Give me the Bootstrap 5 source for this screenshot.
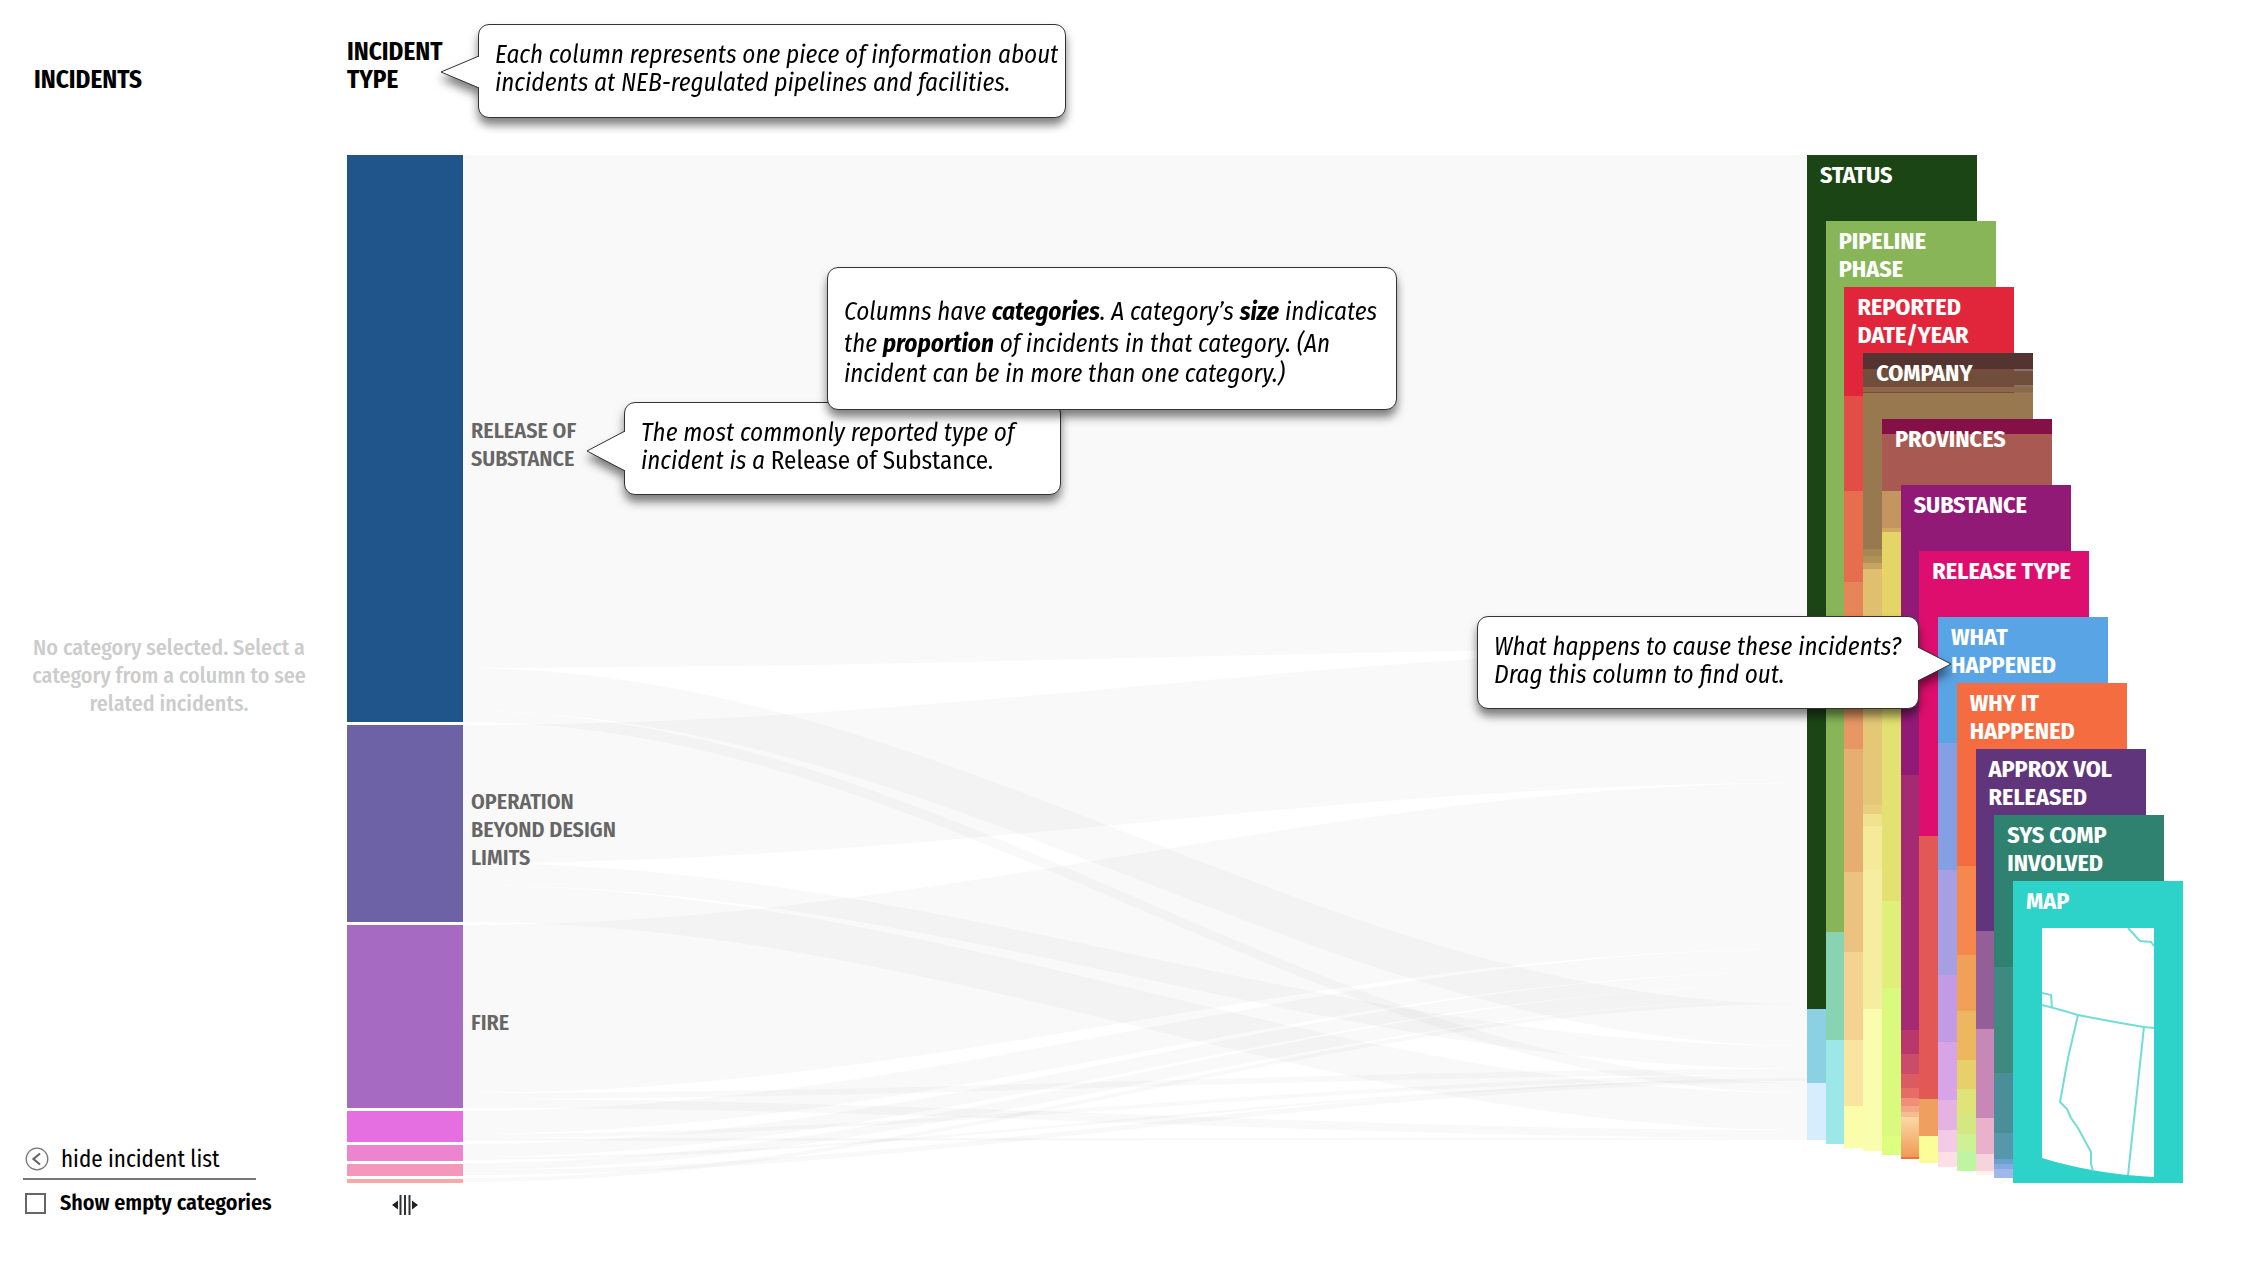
<!DOCTYPE html>
<html lang="en">
<head>
<meta charset="utf-8">
<meta name="viewport" content="width=device-width, initial-scale=1">
<title>Incidents</title>
<link href="https://cdn.jsdelivr.net/npm/bootstrap@5.3.0/dist/css/bootstrap.min.css" rel="stylesheet">
<style>
body { font-family: "Fira Sans Condensed", "Roboto Condensed", Roboto, sans-serif; font-size: 24px; line-height: 28px; color: #000; background: #fff; }
.side-panel { width: 347px; padding: 0 0 46px 23px; }
.top-row { height: 155px; padding-bottom: 61px; }
.col-title { font-size: 25px; line-height: 28px; font-weight: 700; margin: 0; }
.side-panel .col-title { padding-left: 11px; }
.empty-note { color: #ccc; font-size: 22px; font-weight: 500; width: 292px; padding-top: 52px; white-space: nowrap; }
.side-btn { color: #000; font-size: 23px; line-height: 28px; padding: 0 0 5px 2px; width: 233px; gap: 12px; border: 0; border-bottom: 2px solid #777; border-radius: 0; text-align: left; }
.empty-check { padding: 9px 0 0 2px; gap: 14px; font-size: 22px; font-weight: 600; }
.empty-check input { appearance: none; width: 21px; height: 21px; border: 2px solid #666; background: #fff; margin: 0; }
.board { padding-right: 81px; min-width: 0; }
.seg-col { width: 116px; gap: 3px; z-index: 1; }
.seg { flex-basis: 0; min-height: 0; }
.seg-block { width: 116px; flex: none; }
.seg-name { flex: none; width: 170px; padding: 14px 0 0 8px; color: #666; font-size: 22px; font-weight: 600; text-transform: uppercase; }
.flow-area { min-width: 0; }
.flow-area svg { width: 100%; height: 100%; display: block; }
.stack { display: grid; width: 376px; grid-template-columns: repeat(11, minmax(0, 1fr)) 170px; grid-template-rows: repeat(11, 66px) 1fr; }
.stack-col { width: 170px; position: relative; cursor: grab; }
.band { flex-basis: 0; min-height: 0; }
.stack-name { position: absolute; left: 13px; top: 6px; width: 150px; color: #fff; font-size: 24px; font-weight: 700; text-transform: uppercase; }
.map-view { padding: 47px 29px 6px; }
.bottom-row { height: 80px; width: 116px; padding-top: 12px; }
.tip { position: absolute; z-index: 5; background: #fff; border: 1px solid #333; border-radius: 11px; font-size: 25px; line-height: 28px; font-style: italic; padding: 16px; white-space: nowrap; filter: drop-shadow(0 7px 5px rgba(0,0,0,.5)); }
.tip strong { line-height: 32px; font-weight: 700; }
.tip svg { position: absolute; }
.tip-column { left: 478px; top: 24px; width: 588px; height: 94px; }
.tip-column svg { left: -39px; top: 31px; }
.tip-common { left: 624px; top: 402px; width: 437px; height: 93px; }
.tip-common svg { left: -39px; top: 28px; }
.tip-size { left: 827px; top: 267px; width: 570px; height: 143px; padding-top: 28px; }
.tip-drag { left: 1477px; top: 616px; width: 442px; height: 93px; }
.tip-drag svg { right: -34px; top: 29px; }
</style>
<script src="https://cdn.jsdelivr.net/npm/bootstrap@5.3.0/dist/js/bootstrap.bundle.min.js"></script>
</head>
<body>
<div class="d-flex min-vh-100 position-relative">
  <aside class="side-panel d-flex flex-column flex-shrink-0">
    <div class="top-row d-flex align-items-end"><h2 class="col-title">INCIDENTS</h2></div>
    <div class="flex-grow-1 d-flex align-items-center"><p class="empty-note text-center mb-0">No category selected. Select a<br>category from a column to see<br>related incidents.</p></div>
    <button type="button" class="btn side-btn d-flex align-items-center">
      <svg width="24" height="24" viewBox="0 0 24 24" fill="none" aria-hidden="true"><circle cx="12" cy="12" r="10.8" stroke="#777" stroke-width="1.3"/><path d="M15 6.5 8.500 12l6.500 5.500" stroke="#666" stroke-width="2.200"/></svg>
      <span>hide incident list</span>
    </button>
    <div class="empty-check d-flex align-items-center">
      <input type="checkbox" id="showEmpty"><label for="showEmpty">Show empty categories</label>
    </div>
  </aside>

  <main class="board flex-grow-1 d-flex flex-column">
    <div class="top-row d-flex align-items-end"><h2 class="col-title">INCIDENT<br>TYPE</h2></div>
    <div class="flex-grow-1 d-flex">
      <div class="seg-col d-flex flex-column flex-shrink-0" id="segments"></div>
      <div class="flow-area flex-grow-1"><svg id="flows" viewBox="463 155 1344 1028" preserveAspectRatio="none" aria-hidden="true"></svg></div>
      <div class="stack flex-shrink-0" id="stack"></div>
    </div>
    <div class="bottom-row text-center">
      <button type="button" class="btn p-0 border-0 d-block mx-auto" aria-label="Move column">
        <svg width="26" height="20" viewBox="0 0 26 20" class="d-block"><path d="M0 10 6 5.500v9zM26 10l-6-4.500v9z" fill="#222"/><path d="M8.500 0v20M13 0v20M17.500 0v20" stroke="#333" stroke-width="2"/></svg>
      </button>
    </div>
  </main>

  <div class="tip tip-column" role="note">Each column represents one piece of information about<br>incidents at NEB-regulated pipelines and facilities.
    <svg width="40" height="32" viewBox="0 0 40 32"><path d="M40 0 1 16l39 16" fill="#fff"/><path d="M39 0 1 16l38 16" fill="none" stroke="#333"/></svg></div>
  <div class="tip tip-common" role="note">The most commonly reported type of<br>incident is a <span class="fst-normal">Release of Substance.</span>
    <svg width="40" height="40" viewBox="0 0 40 40"><path d="M40 0 1 20l39 20" fill="#fff"/><path d="M39 0 1 20l38 20" fill="none" stroke="#333"/></svg></div>
  <div class="tip tip-size" role="note">Columns have <strong>categories</strong>. A category’s <strong>size</strong> indicates<br>the <strong>proportion</strong> of incidents in that category. (An<br>incident can be in more than one category.)</div>
  <div class="tip tip-drag" role="note">What happens to cause these incidents?<br>Drag this column to find out.
    <svg width="35" height="36" viewBox="0 0 35 36"><path d="M0 1 34 18 0 35" fill="#fff"/><path d="M1 1 34 18 1 35" fill="none" stroke="#333"/></svg></div>
</div>

<script>
// Incident type categories: share of the column, colour, label
const types = [
  [566, '#20558c', 'Release of<br>Substance'], [197, '#6e62a6', 'Operation<br>beyond design<br>limits'], [183, '#a66ac2', 'Fire'],
  [31, '#e56ee0', ''], [16, '#ed84cf', ''], [12, '#f596bb', ''], [4, '#f8a9a5', '']
];
document.getElementById('segments').innerHTML = types.map(([n, c, t]) =>
  `<div class="seg d-flex align-items-stretch" style="flex-grow:${n}"><div class="seg-block" style="background:${c}"></div>${t ? `<div class="seg-name align-self-center">${t}</div>` : ''}</div>`).join('');

// Flows: top and bottom on the left column, top and bottom on the right column
const flows = [
  [155, 668, 155, 648], [668, 711, 1004, 1046], [711, 722, 1083, 1093],
  [725, 863, 648, 783], [863, 885, 1046, 1069], [885, 922, 1093, 1130],
  [925, 1093, 783, 949], [1093, 1099, 1069, 1075], [1099, 1108, 1130, 1138],
  [1111, 1134, 949, 972], [1134, 1138, 1075, 1079], [1138, 1141, 1138, 1140],
  [1144, 1157, 972, 985], [1157, 1160, 1079, 1081], [1163, 1170, 985, 1000],
  [1170, 1175, 1078, 1083], [1178, 1182, 1000, 1004]
];
const x0 = 463, x1 = 1807, a = 947, b = 1323;
document.getElementById('flows').innerHTML = flows.map(([p, q, r, s]) =>
  `<path d="M${x0} ${p}C${a} ${p} ${b} ${r} ${x1} ${r}V${s}C${b} ${s} ${a} ${q} ${x0} ${q}Z" fill="#000" fill-opacity=".024"/>`).join('');

// Stacked columns: name, then pairs of lower edge and colour
const G = 'linear-gradient(to right,#7c483e 151px,#8b7068 151px)';
const cols = [
  ['Status', 1009, '#1c4516', 1083, '#8bd0e3', 1140, '#d5edfc'],
  ['Pipeline<br>phase', 932, '#87b558', 1040, '#88d3b1', 1144, '#9ce8e8'],
  ['Reported<br>date/year', 396, '#e1263b', 491, '#e24d45', 582, '#e66d4e', 660, '#e68557', 749, '#e69764', 872, '#e6ae70', 952, '#ebc27f', 1040, '#f4d290', 1106, '#f9e59f', 1148, '#fcfdaa'],
  ['Company', 369, '#533430', 371, G, 385, '#6f4f3c', 387, G, 392, '#8b6947', 393, G, 549, '#97784f', 556, '#a58753', 563, '#b09257', 569, '#c8a460', 660, '#e0c070', 805, '#e5c877', 814, '#ebcf80', 826, '#f1e28f', 869, '#f4ea99', 1009, '#f5eea0', 1151, '#fafdad'],
  ['Provinces', 434, '#841047', 491, '#a85a52', 528, '#c59560', 532, '#d0a860', 660, '#e4d566', 901, '#e2e171', 988, '#def07a', 1136, '#d9f97f', 1155, '#dcff80'],
  ['Substance', 775, '#921a77', 1030, '#a32a73', 1054, '#b8386b', 1074, '#cb4c68', 1088, '#dc5b63', 1098, '#e66c68', 1106, '#ef8f79', 1112, '#f3a788', 1117, '#f6bd93', 1157, 'linear-gradient(#fbd9a5,#f09a58)', 1159, '#ea7440'],
  ['Release type', 836, '#de0e6e', 1099, '#e25855', 1136, '#efa060', 1163, '#fafd98'],
  ['What<br>happened', 743, '#59a4e5', 870, '#859fe4', 975, '#a79fe4', 1042, '#c19ce4', 1100, '#d7a4e7', 1130, '#e5b3e3', 1152, '#f3cbe7', 1167, '#fce0e6'],
  ['Why it<br>happened', 866, '#f46c40', 955, '#f6884e', 1011, '#f1a157', 1060, '#ecb75f', 1089, '#e7cf6b', 1114, '#e0e378', 1134, '#d4e881', 1151, '#cdf193', 1171, '#bff5a0'],
  ['Approx vol<br>released', 931, '#61357c', 1029, '#945e98', 1118, '#c788b7', 1154, '#eab1cd', 1171, '#f5d4de', 1175, '#fef3e8'],
  ['Sys comp<br>involved', 967, '#2f826f', 1073, '#3f8a80', 1133, '#4a8f98', 1159, '#5797ab', 1164, '#6ba1ce', 1169, '#83abe0', 1178, '#a1b8ed'],
  ['Map', 1183, '#2dd2c9']
];
const map = `<div class="map-view position-absolute top-0 start-0 w-100 h-100"><svg class="w-100 h-100 d-block" viewBox="0 0 112 249" preserveAspectRatio="none" aria-hidden="true">
<path d="M0 0H112V249Q52 246 0 230Z" fill="#fff"/>
<g fill="none" stroke="#71ddd5" stroke-width="2"><path d="M86 0 98 13l11 1 3 4M0 65l9 2 1 13M0 77Q16 81 36 87 66 93 102 99l10 1M36 87 26 130 18 174l7 7 4 9 7 10 13 24v12l2 7M102 99 86 247"/></g></svg></div>`;
document.getElementById('stack').innerHTML = cols.map(([name, ...d], i) => {
  let y = 155 + 66 * i, out = '';
  for (let k = 0; k < d.length; k += 2) { out += `<div class="band" style="flex-grow:${d[k] - y};background:${d[k + 1]}"></div>`; y = d[k]; }
  return `<div class="stack-col d-flex flex-column" style="grid-area:${i + 1}/${i + 1}/-1/auto;margin-bottom:${1183 - y}px">${out}<div class="stack-name">${name}</div>${i == 11 ? map : ''}</div>`;
}).join('');
</script>
</body>
</html>
